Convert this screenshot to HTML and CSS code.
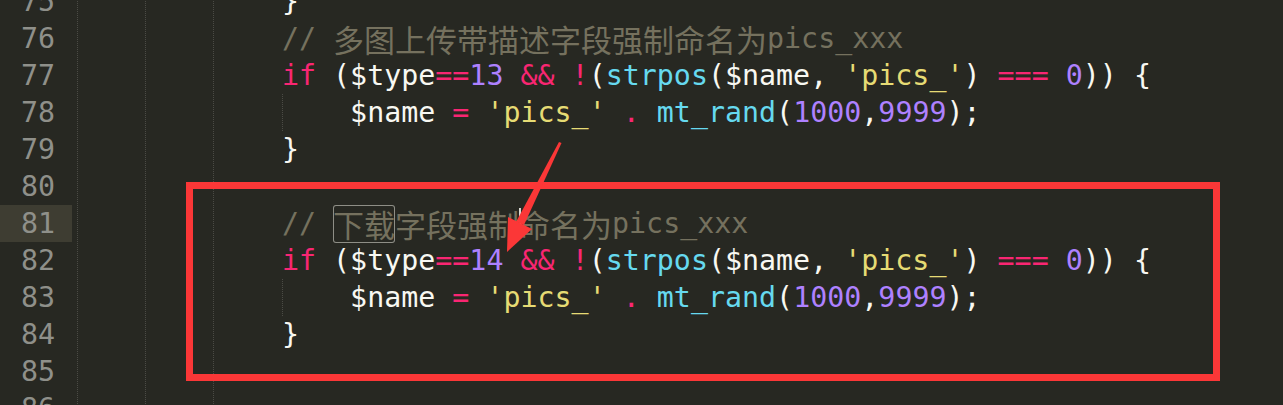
FILE: index.html
```html
<!DOCTYPE html>
<html lang="zh">
<head>
<meta charset="utf-8">
<title>editor</title>
<link rel="stylesheet" href="styles.css">
</head>
<body>
<div class="screen">
  <div class="editor">
    <div class="row"><div class="num">75</div><div class="code">            <span class="w">}</span></div></div>
    <div class="row"><div class="num">76</div><div class="code">            <span class="c">// <span class="cjk">多图上传带描述字段强制命名为</span>pics_xxx</span></div></div>
    <div class="row"><div class="num">77</div><div class="code">            <span class="k">if</span> <span class="w">($type</span><span class="k">==</span><span class="n">13</span> <span class="k">&amp;&amp;</span> <span class="k">!</span><span class="w">(</span><span class="f">strpos</span><span class="w">($name, </span><span class="s">'pics_'</span><span class="w">)</span> <span class="k">===</span> <span class="n">0</span><span class="w">)) {</span></div></div>
    <div class="row"><div class="num">78</div><div class="code inner">                <span class="w">$name</span> <span class="k">=</span> <span class="s">'pics_'</span> <span class="k">.</span> <span class="f">mt_rand</span><span class="w">(</span><span class="n">1000</span><span class="w">,</span><span class="n">9999</span><span class="w">);</span></div></div>
    <div class="row"><div class="num">79</div><div class="code">            <span class="w">}</span></div></div>
    <div class="row"><div class="num">80</div><div class="code"></div></div>
    <div class="row current"><div class="num">81</div><div class="code">            <span class="c">// <span class="find"><span class="cjk">下载</span></span><span class="cjk">字段强制</span><span class="caret"></span><span class="cjk">命名为</span>pics_xxx</span></div></div>
    <div class="row"><div class="num">82</div><div class="code">            <span class="k">if</span> <span class="w">($type</span><span class="k">==</span><span class="n">14</span> <span class="k">&amp;&amp;</span> <span class="k">!</span><span class="w">(</span><span class="f">strpos</span><span class="w">($name, </span><span class="s">'pics_'</span><span class="w">)</span> <span class="k">===</span> <span class="n">0</span><span class="w">)) {</span></div></div>
    <div class="row"><div class="num">83</div><div class="code inner">                <span class="w">$name</span> <span class="k">=</span> <span class="s">'pics_'</span> <span class="k">.</span> <span class="f">mt_rand</span><span class="w">(</span><span class="n">1000</span><span class="w">,</span><span class="n">9999</span><span class="w">);</span></div></div>
    <div class="row"><div class="num">84</div><div class="code">            <span class="w">}</span></div></div>
    <div class="row"><div class="num">85</div><div class="code"></div></div>
    <div class="row"><div class="num">86</div><div class="code"></div></div>
  </div>
  <div class="mark"></div>
  <svg class="arrow" width="1283" height="405" viewBox="0 0 1283 405">
    <polygon points="559,142 561.5,143 524,225 516,222" fill="#fb3737"/>
    <polygon points="507,252 508,217 532,229" fill="#fb3737"/>
  </svg>
</div>
</body>
</html>
```

FILE: styles.css
```css
html, body {
  margin: 0;
  padding: 0;
  background: #272822;
  overflow: hidden;
}

.screen {
  position: relative;
  width: 1283px;
  height: 405px;
  overflow: hidden;
  background: #272822;
}

.editor {
  margin-top: -17px;
  font-family: "DejaVu Sans Mono", "Liberation Mono", monospace;
  font-size: 28.3px;
  line-height: 37px;
  color: #f8f8f2;
  background-image:
    linear-gradient(to bottom, #4b4b45 50%, transparent 50%),
    linear-gradient(to bottom, #4b4b45 50%, transparent 50%),
    linear-gradient(to bottom, #4b4b45 50%, transparent 50%);
  background-size: 1px 2px, 1px 2px, 1px 2px;
  background-repeat: repeat-y;
  background-position: 77px 0, 145px 0, 213px 0;
}

.row {
  display: flex;
  height: 37px;
}

.num {
  width: 72px;
  flex: none;
  box-sizing: border-box;
  padding-right: 17px;
  text-align: right;
  color: #8f908a;
}

.row.current .num {
  background: #3e3d32;
}

.code {
  flex: 1;
  padding-left: 5.5px;
  white-space: pre;
}

.code.inner {
  background-image: linear-gradient(to bottom, #4b4b45 50%, transparent 50%);
  background-size: 1px 2px;
  background-repeat: repeat-y;
  background-position: 210px 0;
}

.w { color: #f8f8f2; }
.k { color: #f92672; }
.n { color: #ae81ff; }
.s { color: #e6db74; }
.f { color: #66d9ef; }
.c { color: #75715e; }

.cjk {
  font-family: "Noto Sans CJK SC", "Noto Sans", sans-serif;
  font-size: 31px;
  line-height: 28px;
  letter-spacing: 0;
  vertical-align: -4px;
}

.find {
  display: inline-block;
  height: 38px;
  border-radius: 3px;
  box-shadow: inset 0 0 0 1px #8e8e86;
}

.caret {
  display: inline-block;
  width: 0;
  height: 27px;
  border-left: 2px solid #d8d8d2;
  margin-right: -2px;
  vertical-align: -2px;
}

.mark {
  position: absolute;
  left: 186px;
  top: 182px;
  width: 1034px;
  height: 199px;
  box-sizing: border-box;
  border: 7px solid #fb3737;
}

.arrow {
  position: absolute;
  left: 0;
  top: 0;
  pointer-events: none;
}
```
